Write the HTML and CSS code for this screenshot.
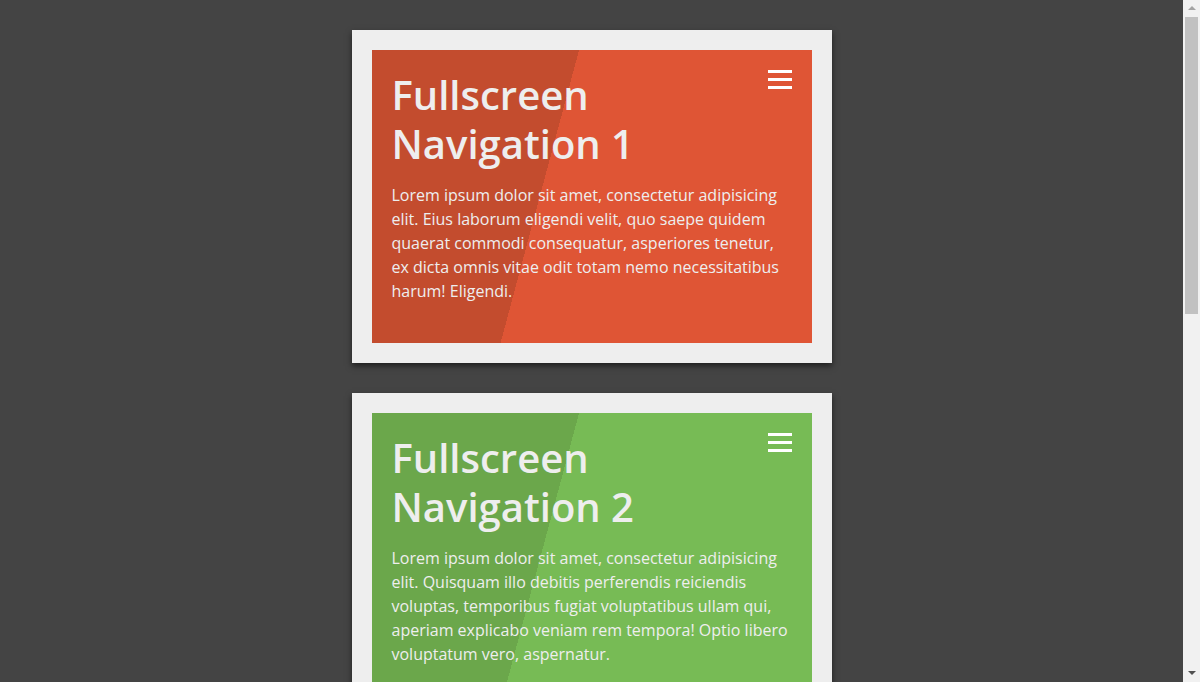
FILE: index.html
```html
<!DOCTYPE html>
<html lang="en">
<head>
<meta charset="utf-8">
<title>Fullscreen Navigation</title>
<link rel="stylesheet" href="styles.css">
</head>
<body>
<main class="list">
  <section class="card">
    <div class="panel panel-orange">
      <div class="panel-head">
        <h1 class="title">Fullscreen Navigation 1</h1>
        <button class="burger" aria-label="Menu"><span></span><span></span><span></span></button>
      </div>
      <p class="text">Lorem ipsum dolor sit amet, consectetur adipisicing elit. Eius laborum eligendi velit, quo saepe quidem quaerat commodi consequatur, asperiores tenetur, ex dicta omnis vitae odit totam nemo necessitatibus harum! Eligendi.</p>
    </div>
  </section>
  <section class="card">
    <div class="panel panel-green">
      <div class="panel-head">
        <h1 class="title">Fullscreen Navigation 2</h1>
        <button class="burger" aria-label="Menu"><span></span><span></span><span></span></button>
      </div>
      <p class="text">Lorem ipsum dolor sit amet, consectetur adipisicing elit. Quisquam illo debitis perferendis reiciendis voluptas, temporibus fugiat voluptatibus ullam qui, aperiam explicabo veniam rem tempora! Optio libero voluptatum vero, aspernatur.</p>
    </div>
  </section>
  <section class="card">
    <div class="panel panel-blue">
      <div class="panel-head">
        <h1 class="title">Fullscreen Navigation 3</h1>
        <button class="burger" aria-label="Menu"><span></span><span></span><span></span></button>
      </div>
      <p class="text">Lorem ipsum dolor sit amet, consectetur adipisicing elit. Eius laborum eligendi velit, quo saepe quidem quaerat commodi consequatur, asperiores tenetur, ex dicta omnis vitae odit totam nemo necessitatibus harum! Eligendi.</p>
    </div>
  </section>
  <section class="card">
    <div class="panel panel-purple">
      <div class="panel-head">
        <h1 class="title">Fullscreen Navigation 4</h1>
        <button class="burger" aria-label="Menu"><span></span><span></span><span></span></button>
      </div>
      <p class="text">Lorem ipsum dolor sit amet, consectetur adipisicing elit. Quisquam illo debitis perferendis reiciendis voluptas, temporibus fugiat voluptatibus ullam qui, aperiam explicabo veniam rem tempora! Optio libero voluptatum vero, aspernatur.</p>
    </div>
  </section>
</main>
<div class="scrollbar" aria-hidden="true">
  <div class="sb-arrow sb-up"></div>
  <div class="sb-track"><div class="sb-thumb"></div></div>
  <div class="sb-arrow sb-down"></div>
</div>
</body>
</html>
```
FILE: styles.css
```css
html, body {
  margin: 0;
  padding: 0;
}
body {
  background: #444444;
  font-family: "Open Sans", "Noto Sans", "Liberation Sans", sans-serif;
  color: #eeeeee;
}
.list {
  display: flex;
  flex-direction: column;
  align-items: center;
  gap: 30px;
  padding: 30px 17px 30px 0;
}
.card {
  width: 440px;
  padding: 20px;
  background: #eeeeee;
  box-shadow: 0 3px 6px rgba(0, 0, 0, 0.55);
}
.panel {
  padding: 20px;
  --dark: #c34c2e;
  --main: #df5534;
  background: linear-gradient(105deg, var(--dark) 0, var(--dark) 200px, var(--main) 200px, var(--main) 100%);
}
.panel-orange { --dark: #c34c2e; --main: #df5535; }
.panel-green { --dark: #6ba74b; --main: #77bb55; }
.panel-blue { --dark: #3a86b0; --main: #4298c8; }
.panel-purple { --dark: #7d4f9a; --main: #8e5aaf; }
.panel-head {
  display: flex;
  justify-content: space-between;
  align-items: flex-start;
  gap: 16px;
}
.title {
  margin: 1px 0 0;
  font-size: 40px;
  line-height: 48.6px;
  font-weight: 600;
  color: #eeeeee;
}
.burger {
  flex: none;
  display: flex;
  flex-direction: column;
  gap: 5px;
  width: 24px;
  padding: 0;
  border: 0;
  background: none;
}
.burger span {
  display: block;
  height: 3px;
  background: #ffffff;
}
.text {
  margin: 15px 0 20px;
  font-size: 16px;
  line-height: 24px;
  color: #eeeeee;
}
.scrollbar {
  position: fixed;
  top: 0;
  right: 0;
  bottom: 0;
  width: 17px;
  background: #f1f1f1;
  display: flex;
  flex-direction: column;
}
.sb-arrow {
  height: 17px;
  flex: none;
  display: flex;
  justify-content: center;
}
.sb-up::before {
  content: "";
  margin-top: 6px;
  border-left: 4px solid transparent;
  border-right: 4px solid transparent;
  border-bottom: 4px solid #a3a3a3;
  height: 0;
}
.sb-down {
  align-items: flex-end;
}
.sb-down::before {
  content: "";
  margin-bottom: 7px;
  border-left: 4px solid transparent;
  border-right: 4px solid transparent;
  border-top: 4px solid #505050;
  height: 0;
}
.sb-track {
  flex: 1;
  padding: 0 2px;
}
.sb-thumb {
  height: 297px;
  background: #c1c1c1;
}
```
